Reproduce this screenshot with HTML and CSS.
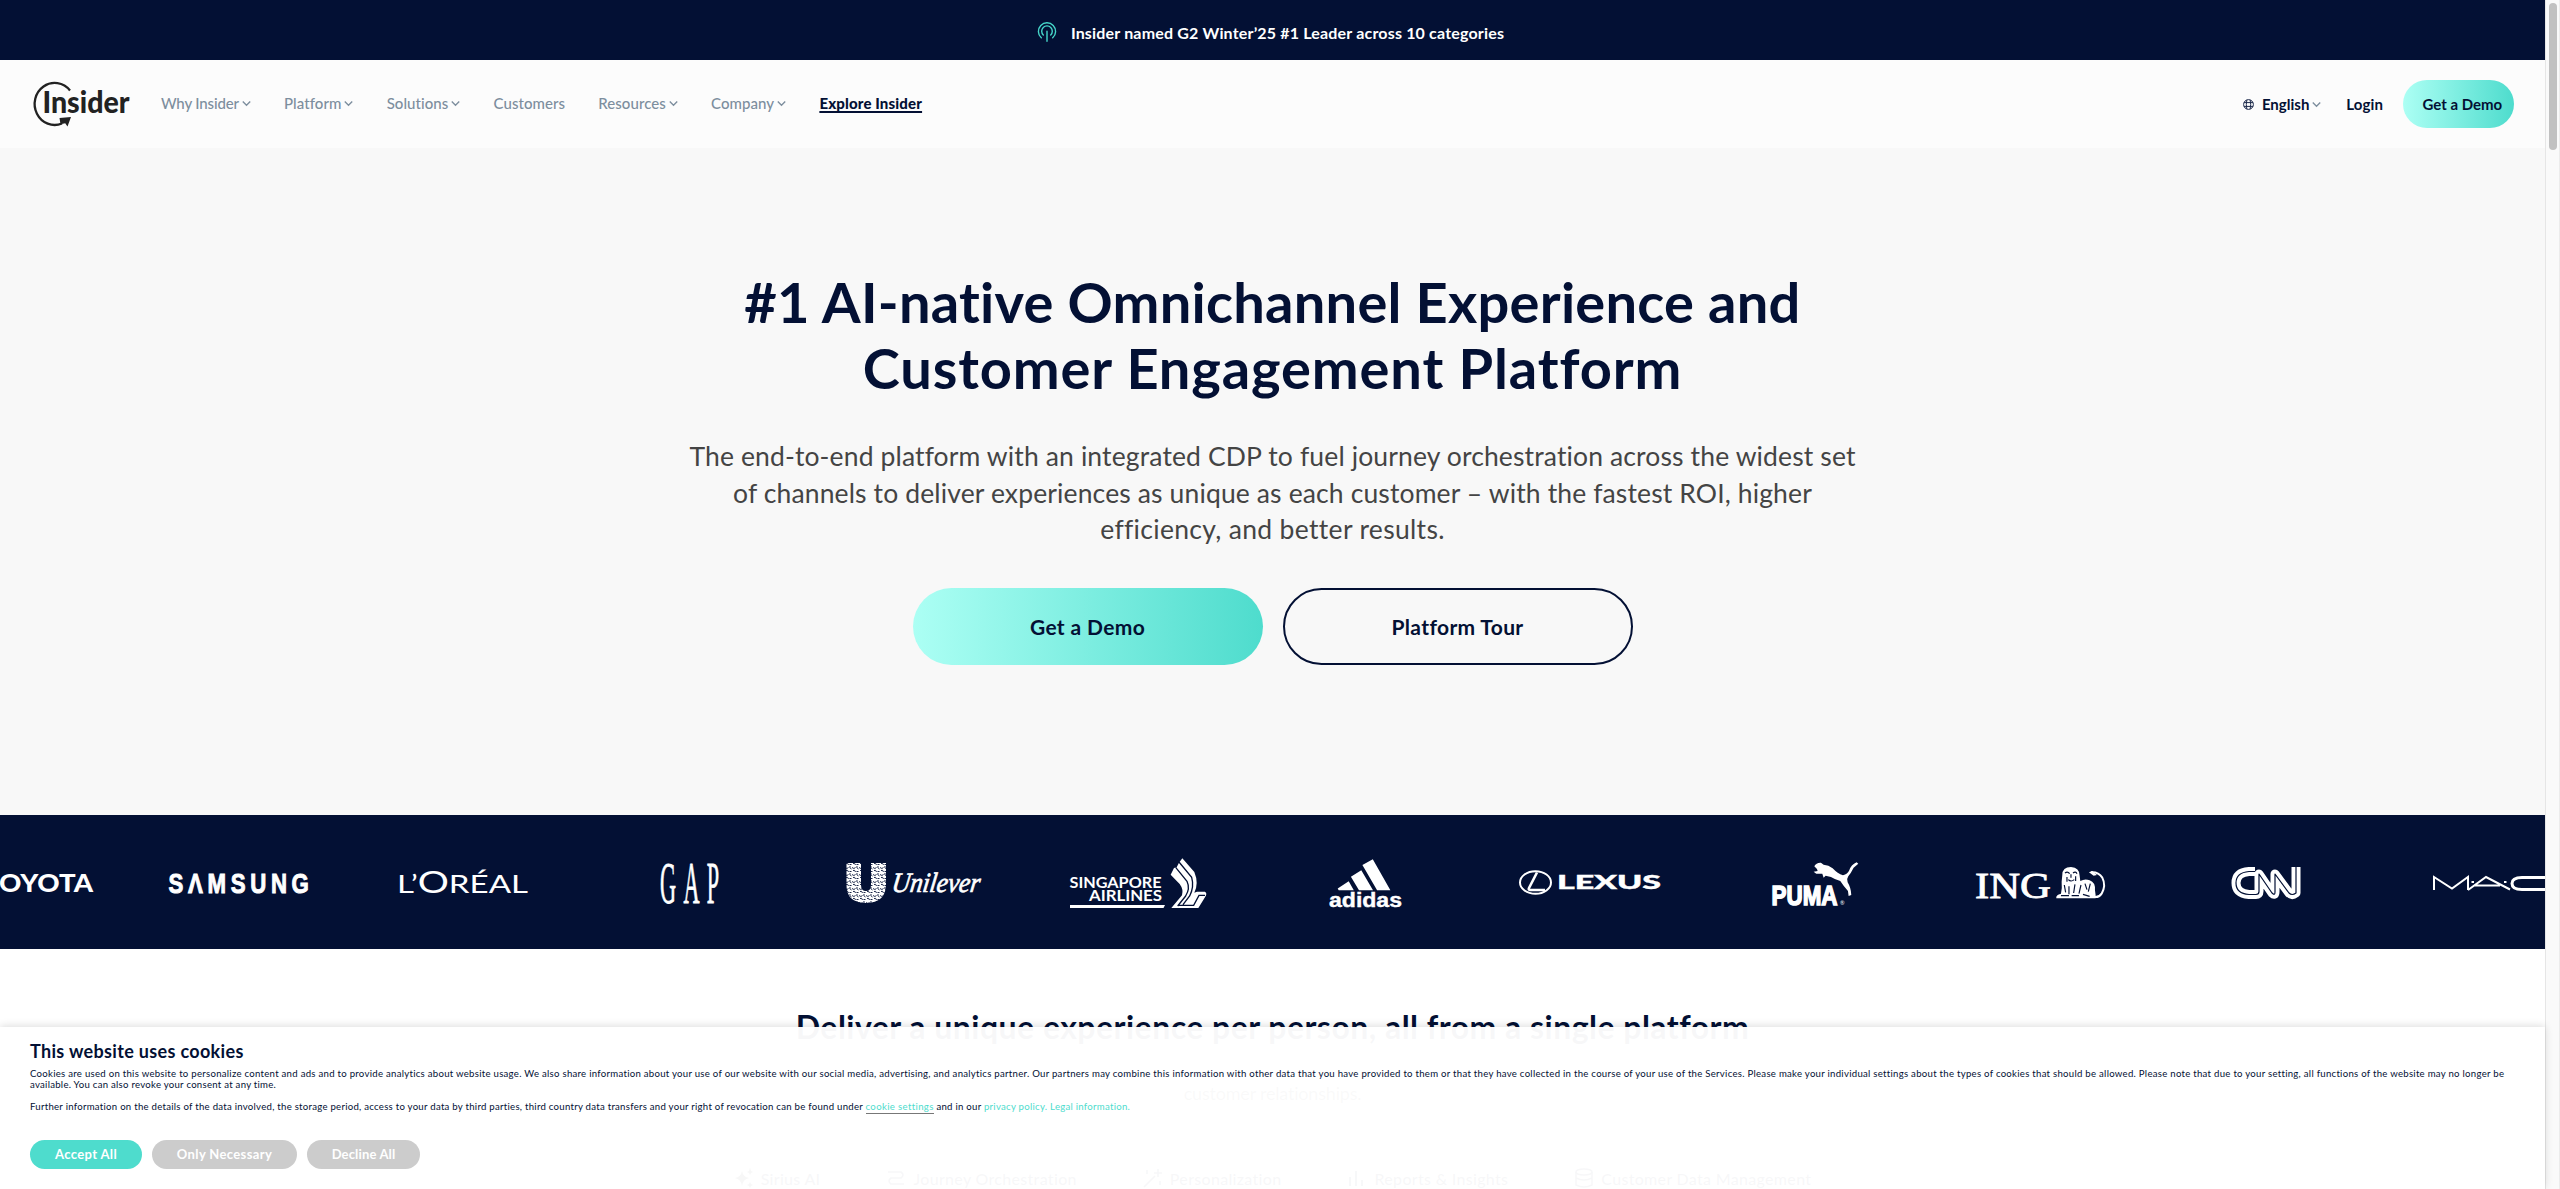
FILE: index.html
```html
<!DOCTYPE html>
<html lang="en">
<head>
<meta charset="utf-8">
<title>Insider</title>
<link rel="stylesheet" href="styles.css">
</head>
<body>
<svg class="defs" width="0" height="0">
  <symbol id="chev" viewBox="0 0 8 6"><path d="M.7 1.2 4 4.5 7.3 1.2" fill="none" stroke="currentColor" stroke-width="1.2"/></symbol>
  <pattern id="speckle" width="7" height="7" patternUnits="userSpaceOnUse">
    <rect width="7" height="7" fill="#fff"/>
    <path d="M0 1.5q2 2 3.500 0M5 0q-1 2 1.500 3M1 4.500q2-1 2.500 1.500M4.500 5.500h2" fill="none" stroke="#031034" stroke-width=".9"/>
  </pattern>
</svg>
<div class="page">
  <div class="banner">
    <svg class="banner-icon" viewBox="0 0 20 20" fill="none" stroke="#46d8cb" stroke-width="1.4" stroke-linecap="round"><path d="M4.300 15.800A8.600 8.600 0 1 1 15.700 15.800M6.300 13A5.300 5.300 0 1 1 13.700 13M10 9.200v10"/></svg>
    <span class="banner-text">Insider named G2 Winter’25 #1 Leader across 10 categories</span>
  </div>

  <header class="header">
    <a class="logo"><svg viewBox="0 0 98 46" width="98" height="46">
      <path d="M38 9.500A20 21 0 1 0 30 42.500" fill="none" stroke="#222" stroke-width="2.300"/>
      <path d="M27.500 37 39 36l-3.500 9.500-2.300-3.200-4.700 1z" fill="#222"/>
      <text x="10.500" y="32" textLength="87" lengthAdjust="spacingAndGlyphs" font-size="30" font-weight="900" fill="#222" stroke="#fcfcfc" stroke-width="2.500" paint-order="stroke">Insider</text>
    </svg></a>
    <nav class="nav">
      <a class="nav-link nav-link--tight">Why Insider<svg class="chev"><use href="#chev"/></svg></a>
      <a class="nav-link">Platform<svg class="chev"><use href="#chev"/></svg></a>
      <a class="nav-link">Solutions<svg class="chev"><use href="#chev"/></svg></a>
      <a class="nav-link">Customers</a>
      <a class="nav-link">Resources<svg class="chev"><use href="#chev"/></svg></a>
      <a class="nav-link">Company<svg class="chev"><use href="#chev"/></svg></a>
      <a class="nav-link nav-link--strong">Explore Insider</a>
    </nav>
    <div class="tools">
      <a class="lang"><svg class="globe" viewBox="0 0 11 11" fill="none" stroke="#1d2a4c" stroke-width="1"><circle cx="5.500" cy="5.500" r="4.900"/><path d="M1 3.600h9M1 7.400h9M3.800 1Q2.800 5.500 3.800 10M7.200 1q1 4.500 0 9"/></svg>English<svg class="chev"><use href="#chev"/></svg></a>
      <a class="login">Login</a>
      <a class="btn-small">Get a Demo</a>
    </div>
  </header>

  <section class="hero">
    <h1><span class="h1-a">#1 AI-native Omnichannel Experience and</span><span class="h1-b">Customer Engagement Platform</span></h1>
    <p class="lead"><span>The end-to-end platform with an integrated CDP to fuel journey orchestration across the widest set</span><span>of channels to deliver experiences as unique as each customer – with the fastest ROI, higher</span><span class="lead-c">efficiency, and better results.</span></p>
    <div class="cta">
      <a class="btn btn-fill">Get a Demo</a>
      <a class="btn btn-line">Platform Tour</a>
    </div>
  </section>

  <section class="brands">
    <svg viewBox="0 0 180 60"><text x="60" y="40.300" font-weight="900" font-size="25.500" textLength="110" lengthAdjust="spacingAndGlyphs">TOYOTA</text></svg>
    <svg viewBox="0 0 180 60"><text transform="translate(20.500 41) scale(.78 1)" font-family="Liberation Sans" font-weight="700" font-size="28.500" stroke="#fff" stroke-width="1" textLength="180" lengthAdjust="spacing">SΛMSUNG</text></svg>
    <svg viewBox="0 0 180 60"><text x="24" y="40.500" font-weight="400" font-size="25.500" textLength="131" lengthAdjust="spacingAndGlyphs">L’<tspan font-size="30" dy=".6">O</tspan><tspan dy="-.6">RÉAL</tspan></text></svg>
    <svg viewBox="0 0 180 60"><text transform="translate(61 50.600) scale(.37 1)" font-family="Liberation Serif" font-size="60" stroke="#fff" stroke-width=".8" textLength="160" lengthAdjust="spacing">GAP</text></svg>
    <svg viewBox="0 0 180 60">
      <path d="M22.500 11h14.500v22q0 6 5 6t5-6V11h15v21q0 19-20 19T22.500 32z" fill="url(#speckle)"/>
      <text class="script" transform="translate(67 40) skewX(-8)" textLength="88" lengthAdjust="spacingAndGlyphs">Unilever</text>
    </svg>
    <svg viewBox="0 0 180 60">
      <text x="20.500" y="36" font-size="14.500" font-weight="700" textLength="92" lengthAdjust="spacingAndGlyphs">SINGAPORE</text>
      <text x="40" y="49" font-size="14.500" font-weight="700" textLength="73" lengthAdjust="spacingAndGlyphs">AIRLINES</text>
      <path d="M21 53h95l-1.500 3H21z"/>
      <g transform="translate(-209.300 -12) scale(.3333)">
        <path d="M1028 55 1064 96Q1078 130 1064 158L1072 155H1096Q1104 160 1096 172L1076 204H995L1027 166Q1032 148 1020 132L993 104 1003 84 1011 82 1018 68z"/>
        <path d="M1008 82 1042 124Q1052 146 1038 168L1014 198M1018 66 1056 112Q1064 140 1050 168L1030 194M1014 196H1062L1078 166H1096" class="ink" stroke-width="4"/>
      </g>
    </svg>
    <svg viewBox="0 0 180 60">
      <path d="m62.700 36.500 11-7.200 5.100 8.900H63.700zM75.900 24.700l10.400-6.400L98 38.200H84zM87.400 13l10.400-5.700 17.600 30.900h-13.300z"/>
      <text x="54" y="54.700" font-family="Liberation Sans" font-size="21" font-weight="700" stroke="#fff" stroke-width=".4" textLength="73" lengthAdjust="spacingAndGlyphs">adidas</text>
    </svg>
    <svg viewBox="0 0 180 60">
      <ellipse cx="35.500" cy="30.500" rx="15.500" ry="11.300" class="line" stroke-width="2"/>
      <path d="M37 20.500 29 36q-1 2 1.500 2H45" class="line" stroke-width="2.600"/>
      <text x="57" y="36.800" font-size="18" font-weight="900" stroke="#fff" stroke-width=".4" textLength="104" lengthAdjust="spacingAndGlyphs">LEXUS</text>
    </svg>
    <svg viewBox="0 0 180 60">
      <text x="46.500" y="52.500" font-family="Liberation Sans" font-size="28" font-weight="700" stroke="#fff" stroke-width="1.600" textLength="66" lengthAdjust="spacingAndGlyphs">PUMA</text>
      <text x="115" y="52.800" font-size="5.500">®</text>
      <path transform="translate(35.300 -7) scale(.3333)" d="M162 64Q168 52 182 53L190 59Q205 60 217 70 232 86 248 91 262 88 267 76 272 60 289 52L294 56 280 68Q272 84 264 94 258 102 262 112 272 128 273 150L265 153 263 138 250 122 240 108Q225 104 212 96L196 92 190 98 186 86 168 86 160 80 172 78 170 72z"/>
    </svg>
    <svg viewBox="0 0 180 60">
      <text x="24" y="46.200" font-family="Liberation Serif" font-size="36" stroke="#fff" stroke-width=".8" textLength="76" lengthAdjust="spacingAndGlyphs">ING</text>
      <g transform="translate(-190 -7) scale(.3333)">
        <path d="M904 90Q904 66 930 66 956 68 956 92L958 108Q972 100 986 106 1004 112 1002 136L1004 150V160H886Q884 150 900 146 904 130 902 110z"/>
        <path d="M912 84q8-6 14 2M936 84q8-6 12 2M918 96v14M944 94v14M930 88v10M922 104q8 8 18 0M910 120l4 22M924 124v24M942 118l-4 26M960 120l-6 26M972 116l6 18M988 116l-6 24M900 152h24M932 152h22M966 148l20 6" class="ink" stroke-width="3.500"/>
        <path d="M990 82Q1012 80 1024 98 1036 122 1022 146 1014 158 1000 156" class="line" stroke-width="6"/>
        <path d="m984 82 10-4 14 12-10 2z"/>
      </g>
    </svg>
    <svg viewBox="0 0 180 60" stroke-linejoin="round">
      <path d="M79 19.500h-6q-13 1-13 11.500t13 11.500h7q3 0 3-3V22l13 19q3 3 3-1V22l14 19q3 3 7 0V15" class="line" stroke-width="9"/>
      <path d="M79 19.500h-6q-13 1-13 11.500t13 11.500h7q3 0 3-3V22l13 19q3 3 3-1V22l14 19q3 3 7 0V15" class="ink" stroke-width="1.200"/>
    </svg>
    <svg viewBox="0 0 180 60">
      <path d="M33 38V25l18 11.500L67 25v13M67 38l18-13 24 12.500M73 33.500h26" class="line" stroke-width="2"/>
      <path d="M146 25.500h-25q-10 0-10 6t10 6h25" class="line" stroke-width="3"/>
      <path d="M70.500 30h2.500M103 30h2.500" class="line" stroke-width="2"/>
    </svg>
  </section>

  <section class="suite">
    <h2>Deliver a unique experience per person, all from a single platform</h2>
    <p class="suite-text">customer relationships.</p>
    <div class="tabs">
      <span class="tab tab-active"><svg viewBox="0 0 20 20"><path d="M8 3q1 6 7 7-6 1-7 8-1-7-7-8 6-1 7-7zM16 0l1 3 2 1-2 1-1 2-1-2-2-1 2-1zM16 14l1 2 2 1-2 1-1 2-1-2-2-1 2-1z"/></svg>Sirius AI</span>
      <span class="tab"><svg viewBox="0 0 20 20" fill="none" stroke="#031034" stroke-width="1.600"><path d="M2 4h13q4 3 0 6H5q-4 3 0 6h13"/></svg>Journey Orchestration</span>
      <span class="tab"><svg viewBox="0 0 20 20" fill="none" stroke="#031034" stroke-width="1.600"><path d="m1 19 11-11M15 1v8M11 5h8M4 2v4M17 13v4"/></svg>Personalization</span>
      <span class="tab"><svg viewBox="0 0 20 20" fill="none" stroke="#031034" stroke-width="1.800"><path d="M3 9v9M9 3v15M15 12v6"/></svg>Reports &amp; Insights</span>
      <span class="tab"><svg viewBox="0 0 20 20" fill="none" stroke="#031034" stroke-width="1.500"><path d="M2 4v13q8 4 16 0V4M2 10q8 4 16 0"/><ellipse cx="10" cy="4" rx="8" ry="3"/></svg>Customer Data Management</span>
    </div>
  </section>

  <aside class="cookies">
    <h3>This website uses cookies</h3>
    <p class="c-line c-first">Cookies are used on this website to personalize content and ads and to provide analytics about website usage. We also share information about your use of our website with our social media, advertising, and analytics partner. Our partners may combine this information with other data that you have provided to them or that they have collected in the course of your use of the Services. Please make your individual settings about the types of cookies that should be allowed. Please note that due to your setting, all functions of the website may no longer be</p>
    <p class="c-line">available. You can also revoke your consent at any time.</p>
    <p class="c-line c-more">Further information on the details of the data involved, the storage period, access to your data by third parties, third country data transfers and your right of revocation can be found under <a class="c-link c-under">cookie settings</a> and in our <a class="c-link">privacy policy.</a> <a class="c-link">Legal information.</a></p>
    <div class="c-buttons">
      <button class="c-btn c-accept">Accept All</button>
      <button class="c-btn c-only">Only Necessary</button>
      <button class="c-btn c-decline">Decline All</button>
    </div>
  </aside>
</div>
<div class="scroll"><div class="thumb"></div></div>
</body>
</html>
```
FILE: styles.css
```css
* { box-sizing: border-box; margin: 0; padding: 0; }
body {
  display: flex;
  height: 1189px;
  overflow: hidden;
  font-family: Lato, "Noto Sans", sans-serif;
  color: #031034;
  background: #fff;
}
.defs { position: absolute; }
.page { width: 2545px; height: 1189px; overflow: hidden; flex: none; }

.banner {
  height: 60px;
  padding: 4px 4px 0 0;
  display: flex;
  align-items: center;
  justify-content: center;
  gap: 14px;
  background: #031034;
  color: #fff;
}
.banner-icon { width: 20px; height: 20px; }
.banner-text { font-size: 16px; font-weight: 700; letter-spacing: .175px; }

.header {
  height: 88px;
  padding: 0 31px 0 32px;
  display: flex;
  align-items: center;
  background: #fcfcfc;
}
.logo { width: 98px; height: 46px; margin-right: 31px; }
.logo svg { display: block; overflow: visible; }
.nav { display: flex; gap: 33.200px; margin-top: -2px; }
.nav-link {
  display: flex;
  align-items: center;
  gap: 3px;
  font-size: 15px;
  line-height: 18px;
  font-weight: 500;
  letter-spacing: .06px;
  color: #7d8e9e;
}
.nav-link--tight { letter-spacing: -.15px; }
.nav-link--strong {
  display: block;
  font-weight: 900;
  color: #031034;
  text-decoration: underline;
  text-decoration-thickness: 1.500px;
  text-underline-offset: 2px;
  letter-spacing: .15px;
}
.chev { width: 9px; height: 7px; margin-top: 1px; }
.tools { margin-left: auto; display: flex; align-items: center; font-size: 15px; font-weight: 700; }
.lang { display: flex; align-items: center; }
.lang .chev { margin-left: 3px; color: #7d8e9e; }
.globe { width: 11px; height: 11px; margin-right: 8px; }
.login { margin-left: 25px; letter-spacing: .1px; }
.btn-small {
  width: 111px;
  height: 48px;
  margin-left: 20px;
  padding-left: 19.500px;
  line-height: 48px;
  border-radius: 24px;
  background: linear-gradient(90deg, #acfff4, #4edccd);
}

.hero {
  height: 667px;
  padding-top: 121px;
  background: #f8f8f8;
  text-align: center;
}
.hero h1 { font-size: 56px; line-height: 66px; font-weight: 700; }
.hero h1 span, .lead span { display: block; white-space: nowrap; }
.h1-a { letter-spacing: .25px; }
.h1-b { letter-spacing: .88px; }
.lead {
  margin-top: 37px;
  font-size: 26.500px;
  line-height: 36.500px;
  letter-spacing: .13px;
  color: #444;
}
.lead .lead-c { letter-spacing: .32px; }
.cta { margin-top: 40px; display: flex; justify-content: center; gap: 20px; }
.btn {
  width: 350px;
  height: 77px;
  display: flex;
  align-items: center;
  justify-content: center;
  border-radius: 39px;
  font-size: 21px;
  font-weight: 700;
  letter-spacing: .35px;
}
.btn-fill { background: linear-gradient(90deg, #acfff4, #4edccd); }
.btn-line { border: 2px solid #031034; }

.brands {
  height: 134px;
  display: flex;
  align-items: center;
  justify-content: center;
  gap: 45.300px;
  background: #031034;
  overflow: hidden;
}
.brands svg { width: 180px; height: 60px; flex: none; overflow: visible; fill: #fff; }
.brands svg:first-child { margin-left: -41px; }
.brands .line { fill: none; stroke: #fff; }
.brands .ink { fill: none; stroke: #031034; }
.script {
  font-family: "Liberation Serif", serif;
  font-style: italic;
  font-size: 28px;
  stroke: #fff;
  stroke-width: .7px;
}

.suite { height: 240px; padding-top: 58px; text-align: center; }
.suite h2 { font-size: 32px; line-height: 40px; font-weight: 700; letter-spacing: .472px; }
.suite-text { margin-top: 31px; font-size: 18px; line-height: 30px; letter-spacing: -.2px; color: #555; }
.tabs { margin-top: 45px; display: flex; justify-content: center; gap: 26px; }
.tab {
  height: 50px;
  padding: 0 20px;
  display: flex;
  align-items: center;
  gap: 7px;
  font-size: 16px;
  font-weight: 500;
  letter-spacing: .3px;
  white-space: nowrap;
  border-radius: 16px;
}
.tab svg { width: 20px; height: 20px; }
.tab-active { background: #eee; }

.cookies {
  position: absolute;
  left: 0;
  bottom: 0;
  width: 2545px;
  height: 162px;
  padding: 12px 30px 0;
  background: rgba(255, 255, 255, .97);
  box-shadow: 0 -1px 8px rgba(0, 0, 0, .14);
}
.cookies h3 { font-size: 18px; line-height: 24px; font-weight: 700; letter-spacing: .331px; margin-bottom: 5px; }
.c-line { font-size: 9.600px; line-height: 11px; letter-spacing: .266px; white-space: nowrap; }
.c-first { letter-spacing: .274px; }
.c-link { color: #4edccd; }
.c-more { margin-top: 11px; }
.c-under { letter-spacing: .35px; border-bottom: 1px solid #777; padding-bottom: 1px; }
.c-buttons { margin-top: 28px; display: flex; gap: 10px; }
.c-btn {
  height: 29px;
  border: 0;
  border-radius: 14.500px;
  font: 700 13px/29px Lato, sans-serif;
  letter-spacing: .36px;
  color: #fff;
  background: #ccc;
}
.c-accept { width: 112px; background: #4edccd; }
.c-only { width: 145px; }
.c-decline { width: 113px; letter-spacing: .15px; }

.scroll { width: 15px; flex: none; background: #fafafa; border-left: 1px solid #e6e6e6; border-right: 1px solid #ececec; }
.thumb { width: 8px; height: 147px; margin: 3px auto 0; border-radius: 4px; background: #c1c1c1; }
```
